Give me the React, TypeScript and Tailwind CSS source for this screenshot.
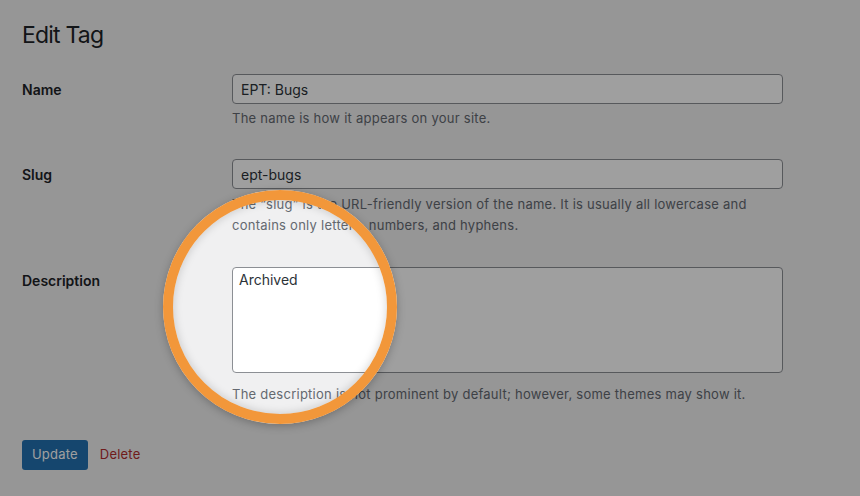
import React from 'react';

function Row({ label, children, className = '', labelCls = 'pt-[20px]' }: { label: string; children: React.ReactNode; className?: string; labelCls?: string }) {
  return (
    <div className={`flex ${className}`}>
      <div className={`w-[210px] shrink-0 text-[14px] leading-[21px] font-semibold text-[#1d2327] ${labelCls}`}>{label}</div>
      <div className="w-[551px] pt-[15px]">{children}</div>
    </div>
  );
}

const inputCls =
  'block h-[30px] w-full rounded-[4px] border border-[#8c8f94] bg-white px-[8px] text-[14px] text-[#2c3338] outline-none';

export default function App() {
  return (
    <div className="relative h-[496px] w-[860px] overflow-hidden bg-[#f0f0f1] font-['Inter',sans-serif] text-[#1d2327]">
      <div className="pl-[22px] pt-[20px]">
        <h1 className="text-[23px] leading-[30px] font-normal tracking-[-0.8px]">Edit Tag</h1>

        <div className="mt-[9px]">
          {/* Name */}
          <Row label="Name" className="pb-[15px]">
            <input readOnly value="EPT: Bugs" className={inputCls} />
            <p className="mt-[4px] text-[13px] leading-[21px] tracking-[0.25px] text-[#646970]">The name is how it appears on your site.</p>
          </Row>

          {/* Slug */}
          <Row label="Slug" className="pb-[16px]">
            <input readOnly value="ept-bugs" className={inputCls} />
            <p className="mt-[5px] whitespace-nowrap text-[13px] leading-[21px] tracking-[0.25px] text-[#646970]">
              The “slug” is the URL-friendly version of the name. It is usually all lowercase and
              <br />
              contains only letters, numbers, and hyphens.
            </p>
          </Row>

          {/* Description */}
          <Row label="Description" labelCls="pt-[18px]">
            <textarea
              readOnly
              value="Archived"
              className="block h-[106px] w-full resize-none rounded-[4px] border border-[#8c8f94] bg-white px-[6px] py-[2px] text-[14px] leading-[20px] text-[#2c3338] outline-none"
            />
            <p className="mt-[11px] text-[13px] leading-[21px] tracking-[0.25px] text-[#646970]">
              The description is not prominent by default; however, some themes may show it.
            </p>
          </Row>
        </div>

        <div className="mt-[35px] flex items-center">
          <button className="h-[30px] rounded-[3px] bg-[#2271b1] px-[10px] text-[13px] tracking-[0.2px] text-white">Update</button>
          <span className="ml-[12px] text-[13px] tracking-[0.2px] text-[#b32d2e]">Delete</span>
        </div>
      </div>

      {/* spotlight */}
      <div className="pointer-events-none absolute left-[163px] top-[190px] h-[234px] w-[234px] rounded-full border-[10px] border-[#f2973a] shadow-[0_2px_8px_rgba(0,0,0,0.25),0_0_0_2000px_rgba(0,0,0,0.375),inset_0_0_10px_rgba(0,0,0,0.18)]" />
    </div>
  );
}
